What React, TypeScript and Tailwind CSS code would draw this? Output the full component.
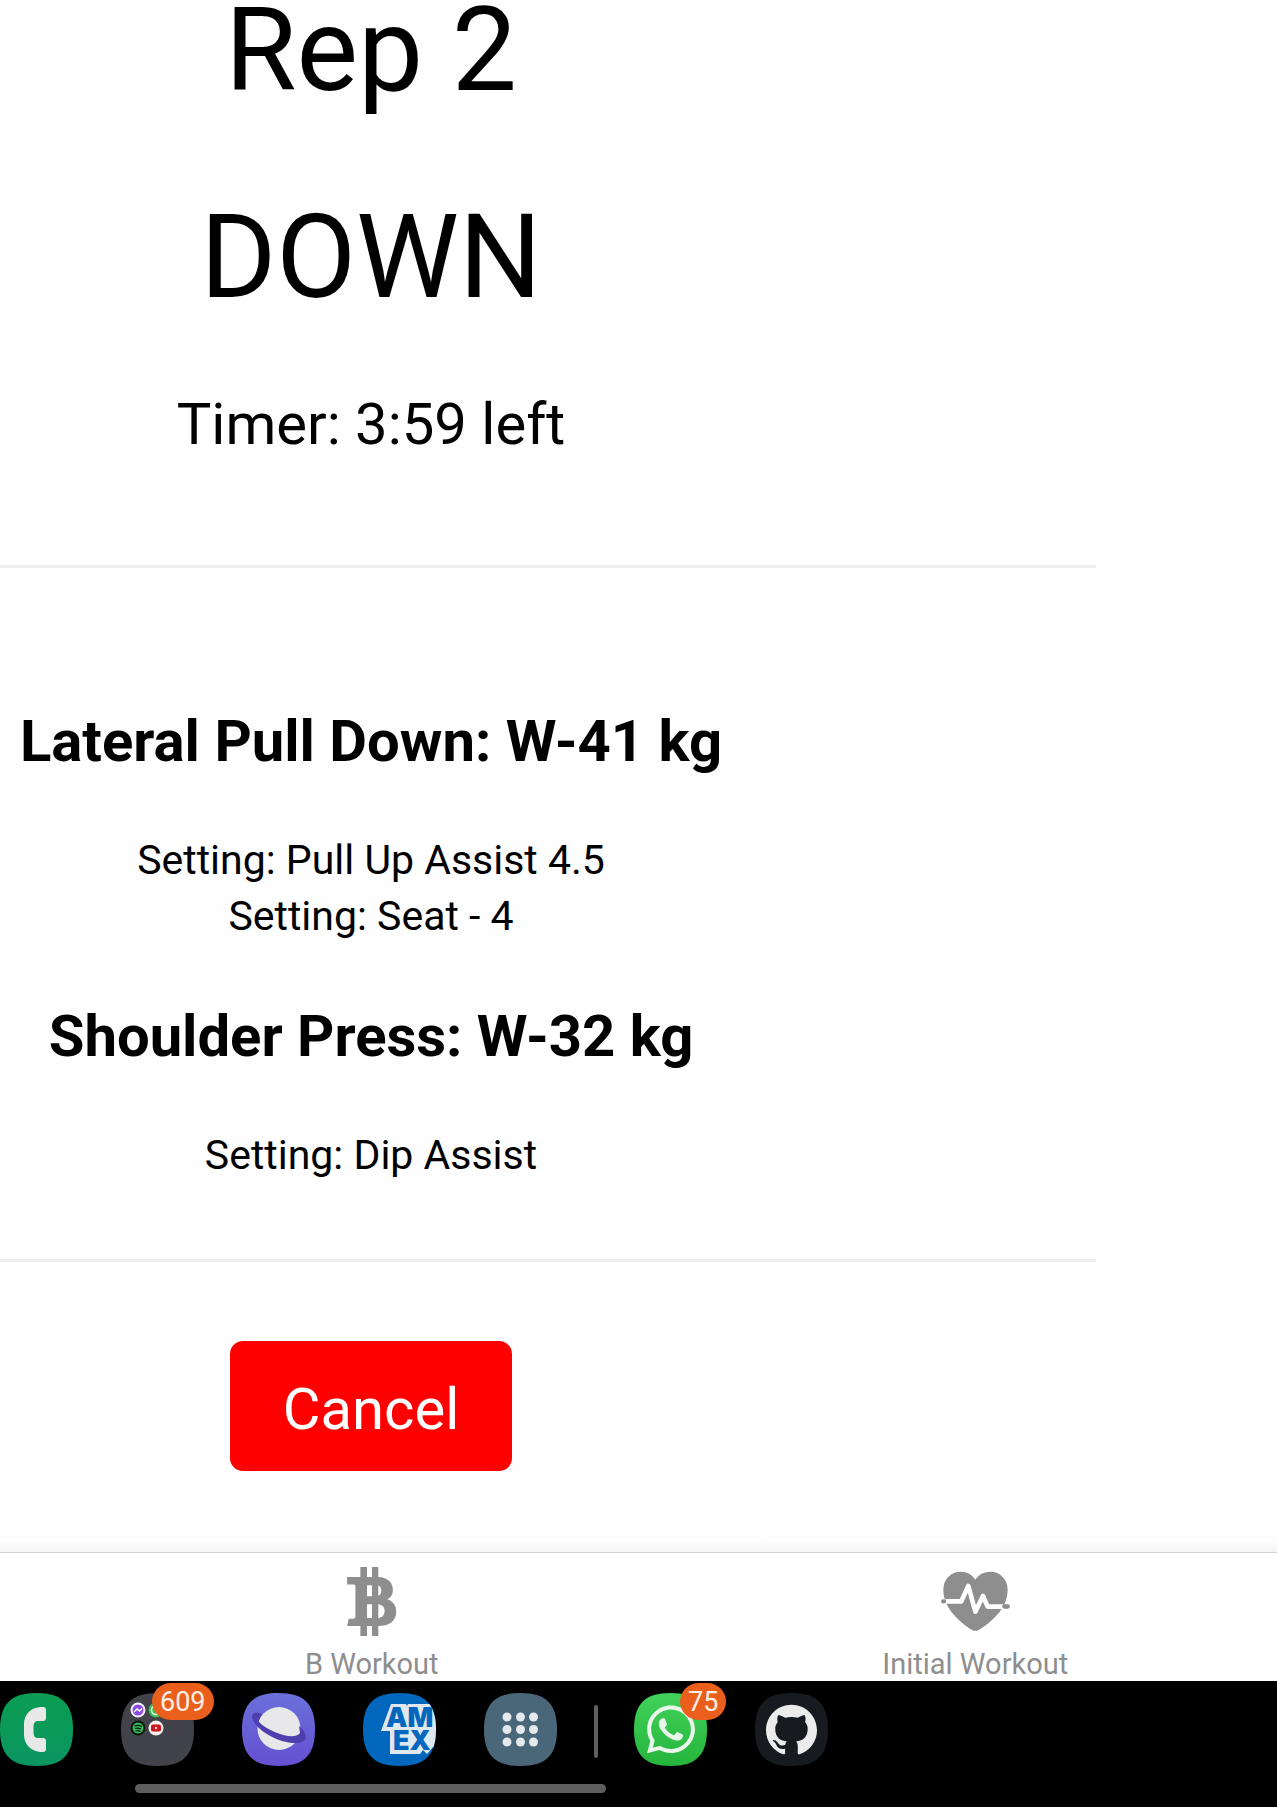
import type { ReactNode } from "react";

const SQUIRCLE =
  "M36.5 0C62 0 73 11 73 36.5S62 73 36.5 73 0 62 0 36.5 11 0 36.5 0Z";

const WHATSAPP =
  "M380.9 97.1C339 55.1 283.2 32 223.9 32c-122.4 0-222 99.6-222 222 0 39.1 10.2 77.3 29.6 111L0 480l117.7-30.9c32.4 17.7 68.9 27 106.1 27h.1c122.3 0 224.1-99.6 224.1-222 0-59.3-25.2-115-67.1-157zm-157 341.6c-33.2 0-65.7-8.9-94-25.7l-6.7-4-69.8 18.3L72 359.2l-4.4-7c-18.5-29.4-28.2-63.3-28.2-98.2 0-101.7 82.8-184.5 184.6-184.5 49.3 0 95.6 19.2 130.4 54.1 34.8 34.9 56.2 81.2 56.1 130.5 0 101.8-84.9 184.6-186.6 184.6z";

const HANDSET =
  "M325.1 300.5c-5.5-2.8-32.8-16.2-37.9-18-5.1-1.9-8.8-2.8-12.5 2.8-3.7 5.6-14.3 18-17.6 21.8-3.2 3.7-6.5 4.2-12 1.4-32.6-16.3-54-29.1-75.5-66-5.7-9.8 5.7-9.1 16.3-30.3 1.8-3.7.9-6.9-.5-9.7-1.4-2.8-12.5-30.1-17.1-41.2-4.5-10.8-9.1-9.3-12.5-9.5-3.2-.2-6.9-.2-10.6-.2-3.7 0-9.7 1.4-14.8 6.9-5.1 5.6-19.4 19-19.4 46.3 0 27.3 19.9 53.7 22.6 57.4 2.8 3.7 39.1 59.7 94.8 83.8 35.2 15.2 49 16.5 66.6 13.9 10.7-1.6 32.8-13.4 37.4-26.4 4.6-13 4.6-24.1 3.2-26.4-1.3-2.5-5-3.9-10.5-6.6z";

const OCTOCAT =
  "M12 .297c-6.63 0-12 5.373-12 12 0 5.303 3.438 9.8 8.205 11.385.6.113.82-.258.82-.577 0-.285-.01-1.04-.015-2.04-3.338.724-4.042-1.61-4.042-1.61C4.422 18.07 3.633 17.7 3.633 17.7c-1.087-.744.084-.729.084-.729 1.205.084 1.838 1.236 1.838 1.236 1.07 1.835 2.809 1.305 3.495.998.108-.776.417-1.305.76-1.605-2.665-.3-5.466-1.332-5.466-5.93 0-1.31.465-2.38 1.235-3.22-.135-.303-.54-1.523.105-3.176 0 0 1.005-.322 3.3 1.23.96-.267 1.98-.399 3-.405 1.02.006 2.04.138 3 .405 2.28-1.552 3.285-1.23 3.285-1.23.645 1.653.24 2.873.12 3.176.765.84 1.23 1.91 1.23 3.22 0 4.61-2.805 5.625-5.475 5.92.42.36.81 1.096.81 2.22 0 1.606-.015 2.896-.015 3.286 0 .315.21.69.825.57C20.565 22.092 24 17.592 24 12.297c0-6.627-5.373-12-12-12";

function BitcoinIcon() {
  return (
    <svg viewBox="200 80 150 208" className="h-[69px] w-[50px]" fill="#8e8e8e" aria-hidden="true">
      <path
        fillRule="evenodd"
        d="M200 110H292C322 111 338 126 338 149C338 163 332 172 321 177C339 183 348 196 348 214C348 243 327 258 293 258H200L205 236H216C222 236 225 234 225 229V139C225 135 223 133 218 133H200ZM260 135V168H290C298 167 303 161 303 151C303 141 298 135 290 135ZM260 192V234H290C305 234 313 226 313 212C313 199 305 192 290 192Z"
      />
      <path d="M240 80h20v208h-20zM275 80h19v208h-19z" />
    </svg>
  );
}

function HeartPulseIcon() {
  return (
    <svg viewBox="243 93 207 180" className="h-[60px] w-[69px]" aria-hidden="true">
      <path
        fill="#8e8e8e"
        d="M346 119C336 103 321 95 302 95C272 95 250 118 250 149C250 199 290 240 335 269Q346 276 357 269C404 240 443 199 443 149C443 118 421 95 391 95C372 95 356 103 346 119Z"
      />
      <path
        fill="none"
        stroke="#fff"
        strokeWidth="14"
        strokeLinejoin="round"
        d="M256 184H304L325 138L346 215L369 168L383 200H430"
      />
      <path stroke="#8e8e8e" strokeWidth="13" strokeLinecap="round" d="M249.500 184H252M433 199.500H443.500" />
    </svg>
  );
}

function DockIcon({ label, fill, badge, children }: { label: string; fill: string; badge?: string; children: ReactNode }) {
  return (
    <button type="button" aria-label={label} className="relative size-[73px] shrink-0">
      <svg viewBox="0 0 73 73" className="size-full" aria-hidden="true">
        <defs>
          <linearGradient id="phone-fill" x2="0" y2="1">
            <stop stopColor="#0a9d52" />
            <stop offset="1" stopColor="#0b9560" />
          </linearGradient>
          <linearGradient id="planet-fill" x2="0" y2="1">
            <stop stopColor="#6a70da" />
            <stop offset="1" stopColor="#6650d2" />
          </linearGradient>
          <linearGradient id="chat-fill" x2="0" y2="1">
            <stop stopColor="#42d25c" />
            <stop offset="1" stopColor="#25b53b" />
          </linearGradient>
          <clipPath id="squircle">
            <path d={SQUIRCLE} />
          </clipPath>
        </defs>
        <path d={SQUIRCLE} fill={fill} />
        {children}
      </svg>
      {badge && (
        <span
          className="absolute -top-[10px] left-full flex h-[37px] min-w-[46px] -translate-x-[27px] items-center justify-center rounded-full bg-[#ea5f1b] px-2 pt-0.5 text-[27px] leading-none text-[#fdeee5] data-wide:-translate-x-[42px]"
          data-wide={badge.length > 2 ? "" : undefined}
        >
          {badge}
        </span>
      )}
    </button>
  );
}

function Exercise({ title, settings }: { title: string; settings: string[] }) {
  return (
    <section className="flex flex-col gap-[57px]">
      <h2 className="text-[58px] leading-[68px] font-bold">{title}</h2>
      <div className="text-[41px] leading-[56px]">
        {settings.map((s) => (
          <p key={s}>Setting: {s}</p>
        ))}
      </div>
    </section>
  );
}

function Tab({ label, icon }: { label: string; icon: ReactNode }) {
  return (
    <a href="#" className="flex flex-1 flex-col items-center">
      <span className="flex h-[95px] items-center pt-px">{icon}</span>
      <span className="text-[29px] leading-[32px]">{label}</span>
    </a>
  );
}

export default function App() {
  return (
    <div className="flex min-h-screen flex-col overflow-hidden bg-[#fefefe] font-['Roboto',sans-serif] text-black">
      <main className="mr-[181px] -ml-[354px] flex flex-col text-center">
        <h1 className="text-[116px] leading-[100px]">Rep 2</h1>
        <p className="mt-[107px] text-[116px] leading-[100px]">DOWN</p>
        <p className="mt-[83px] text-[58px] leading-[68px]">Timer: 3:59 left</p>
        <hr className="mt-[107px] border-0 border-t-3 border-[#eeeeee]" />
        <div className="mt-[139px] flex flex-col gap-[58px]">
          <Exercise title="Lateral Pull Down: W-41 kg" settings={["Pull Up Assist 4.5", "Seat - 4"]} />
          <Exercise title="Shoulder Press: W-32 kg" settings={["Dip Assist"]} />
        </div>
        <hr className="mt-[76px] border-0 border-t-3 border-[#eeeeee]" />
        <button
          type="button"
          className="mt-[79px] self-center rounded-[13px] bg-[#ff0000] px-[53px] pt-[34px] pb-[28px] text-[58px] leading-[68px] text-white"
        >
          Cancel
        </button>
      </main>

      <div className="mt-auto h-3 bg-linear-to-b from-[#fefefe] to-[#f5f5f5]" />
      <nav className="flex h-[129px] border-t border-[#d4d4d4] bg-white pl-[70px] text-[#8e8e8e]">
        <Tab label="B Workout" icon={<BitcoinIcon />} />
        <Tab label="Initial Workout" icon={<HeartPulseIcon />} />
      </nav>

      <footer className="flex h-[126px] shrink-0 flex-col bg-black pt-3">
        <div className="flex items-center gap-12">
          <DockIcon label="Phone" fill="url(#phone-fill)">
            <path
              fill="#e8e8e8"
              d="M40 14H43Q46 14 46 17V25Q46 28 43 28H38C35 28 33.500 30 33.500 33V40C33.500 43 35 45 38 45H43Q46 45 46 48V56Q46 59 43 59H40C30 58 24 50 24 42V31C24 22 30 15 40 14Z"
            />
          </DockIcon>
          <DockIcon label="App folder" fill="#42424b" badge="609">
            <circle cx="17" cy="17" r="7.500" fill="#f3f0fa" />
            <circle cx="17" cy="17" r="5.500" fill="#8a4be0" />
            <path d="M13 19l3-3 2.500 2L21 15.500" stroke="#fff" strokeWidth="1.500" fill="none" />
            <circle cx="35" cy="17" r="7.500" fill="#35c14c" />
            <circle cx="35" cy="17" r="4.500" fill="none" stroke="#e8f8ea" strokeWidth="1.500" />
            <circle cx="17" cy="35" r="7.500" fill="#08120b" />
            <circle cx="17" cy="35" r="5.500" fill="#2fb85c" />
            <path d="M13.500 33q4-1.500 7.500.5M14 35.500q3-1 6 .5M14.500 38q3-1 5 .5" stroke="#08120b" strokeWidth="1.200" fill="none" />
            <circle cx="35" cy="35" r="7.500" fill="#f4eeee" />
            <rect x="30" y="31.500" width="10" height="7" rx="2" fill="#cf1118" />
            <path d="M34 33.500l3 1.500-3 1.500z" fill="#fff" />
          </DockIcon>
          <DockIcon label="Internet" fill="url(#planet-fill)">
            <circle cx="37" cy="35.500" r="21.500" fill="#e8e8ea" />
            <path
              fill="#4f3fae"
              d="M20 21C12 18 8 21 11 27C15 36 28 44 40 48C50 51 61 51 63.500 46C65 42 62 37 57 33L58 40C54 45 44 43.500 34 39.500C26 36 19 32 16.500 28Z"
            />
          </DockIcon>
          <DockIcon label="Amex" fill="#0368bd">
            <g clipPath="url(#squircle)" className="font-['Inter',sans-serif] text-[27px] font-black" fill="#0368bd">
              <path fill="#dfe8f1" d="M28 11H43L44 13L45 11H74V57L70 54L64 61L60 57L57 61H27V38H18Z" />
              <text x="23" y="34">AM</text>
              <text x="30" y="57">EX</text>
            </g>
          </DockIcon>
          <DockIcon label="All apps" fill="#4a6679">
            {[24, 36.5, 49].map((y) =>
              [23, 36.5, 49.5].map((x) => <circle key={`${x}-${y}`} cx={x} cy={y} r="4.500" fill="#e3e9ed" />),
            )}
          </DockIcon>
          <div className="mt-1 -mr-3 -ml-[11px] h-[53px] w-1 shrink-0 rounded-sm bg-[#5f5f5f]" />
          <DockIcon label="WhatsApp" fill="url(#chat-fill)" badge="75">
            <g transform="translate(13 9) scale(.107)" fill="#e9f7eb">
              <path d={WHATSAPP} />
              <path d={HANDSET} />
            </g>
          </DockIcon>
          <DockIcon label="GitHub" fill="#171b20">
            <g transform="translate(11 11) scale(2.125)" fill="#ebebeb">
              <path d={OCTOCAT} />
            </g>
          </DockIcon>
        </div>
        <div className="mt-[18px] ml-[135px] h-[9px] w-[471px] rounded-full bg-[#5e5e5e]" />
      </footer>
    </div>
  );
}
